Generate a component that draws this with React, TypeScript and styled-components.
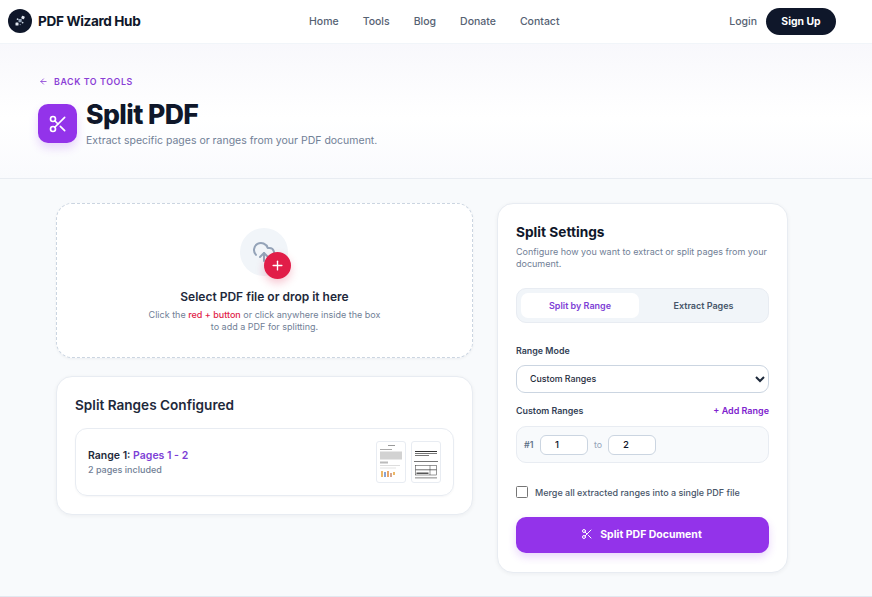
import React from "react";
import styled, { createGlobalStyle } from "styled-components";
import { ArrowLeft, Scissors, CloudUpload, Plus } from "lucide-react";

const GlobalStyle = createGlobalStyle`
  html, body {
    margin: 0;
    padding: 0;
    background: #f8fafc;
    font-family: Inter, "Liberation Sans", sans-serif;
    color: #0f172a;
  }
  * { box-sizing: border-box; }
`;

const Page = styled.div`
  width: 872px;
  height: 597px;
  overflow: hidden;
  display: flex;
  flex-direction: column;
  background: #f8fafc;
  border-bottom: 1px solid #e2e8f0;
`;

const NavBar = styled.header`
  height: 44px;
  flex: none;
  display: flex;
  align-items: center;
  padding: 0 36px 1px 8px;
  background: #fff;
  border-bottom: 1px solid #f1f5f9;
`;

const Brand = styled.div`
  width: 301px;
  display: flex;
  align-items: center;
  gap: 6px;
  font-size: 13.6px;
  font-weight: 700;
  letter-spacing: -0.36px;
  color: #0f172a;
`;

const BrandMark = styled.span`
  width: 24px;
  height: 24px;
  border-radius: 50%;
  background: #0f172a;
  display: flex;
  align-items: center;
  justify-content: center;
`;

const NavLinks = styled.nav`
  display: flex;
  gap: 24px;
`;

const NavLink = styled.a`
  font-size: 10.5px;
  font-weight: 500;
  color: #566273;
`;

const NavActions = styled.div`
  margin-left: auto;
  display: flex;
  align-items: center;
  gap: 9px;
`;

const SignUp = styled.button`
  width: 70px;
  height: 27px;
  border: 0;
  border-radius: 14px;
  background: #0f172a;
  color: #fff;
  font: 700 10.4px Inter, sans-serif;
`;

const Hero = styled.section`
  height: 135px;
  flex: none;
  padding: 31px 38px 0;
  background: linear-gradient(180deg, #f8f8fc 0%, #ffffff 55%, #f9fafd 100%);
  border-bottom: 1px solid #e8ecf2;
`;

const BackLink = styled.a`
  display: flex;
  align-items: center;
  gap: 6px;
  height: 12px;
  padding-left: 1px;
  font-size: 8.8px;
  font-weight: 600;
  letter-spacing: 0.6px;
  color: #8b3fd6;
`;

const TitleRow = styled.div`
  display: flex;
  gap: 9px;
  margin-top: 17px;
`;

const ToolIcon = styled.div`
  width: 39px;
  height: 39px;
  border-radius: 10px;
  background: #9333ea;
  color: #fff;
  display: flex;
  align-items: center;
  justify-content: center;
  box-shadow: 0 5px 10px rgba(147, 51, 234, 0.2);
`;

const Title = styled.h1`
  margin: -6px 0 0;
  font-size: 26.6px;
  line-height: 32px;
  font-weight: 800;
  letter-spacing: -0.6px;
  color: #0f172a;
`;

const Subtitle = styled.p`
  margin: 4px 0 0;
  font-size: 10.5px;
  line-height: 14px;
  color: #718096;
`;

const Main = styled.main`
  display: flex;
  align-items: flex-start;
  gap: 24px;
  padding: 24px 0 0 56px;
`;

const LeftColumn = styled.div`
  width: 417px;
  display: flex;
  flex-direction: column;
  gap: 18px;
`;

const DropZone = styled.div`
  height: 155px;
  padding-top: 24px;
  display: flex;
  flex-direction: column;
  align-items: center;
  background: #fff;
  border: 1px dashed #cbd5e1;
  border-radius: 16px;
  box-shadow: 0 1px 3px rgba(15, 23, 42, 0.05);
`;

const UploadIcon = styled.div`
  position: relative;
  width: 48px;
  height: 48px;
  margin-left: -1px;
  border-radius: 50%;
  background: #f1f5f9;
  color: #94a3b8;
  display: flex;
  align-items: center;
  justify-content: center;
`;

const RedPlus = styled.span`
  position: absolute;
  right: -3px;
  bottom: -3px;
  width: 27px;
  height: 27px;
  border-radius: 50%;
  background: #e11d48;
  color: #fff;
  display: flex;
  align-items: center;
  justify-content: center;
  box-shadow: 0 4px 8px rgba(225, 29, 72, 0.25);
`;

const DropTitle = styled.h3`
  margin: 14px 0 0;
  font-size: 12px;
  line-height: 14px;
  font-weight: 600;
  color: #1e293b;
`;

const DropText = styled.p`
  margin: 5px 0 0;
  font-size: 9px;
  line-height: 12px;
  text-align: center;
  color: #718096;
`;

const RedText = styled.span`
  color: #e11d48;
  font-weight: 500;
`;

const Card = styled.section`
  background: #fff;
  border: 1px solid #e8ecf2;
  border-radius: 16px;
  box-shadow: 0 1px 4px rgba(15, 23, 42, 0.05);
`;

const RangesCard = styled(Card)`
  height: 139px;
  padding: 20px 18px 0;
`;

const CardTitle = styled.h2`
  margin: 0;
  font-size: 13.6px;
  line-height: 17px;
  font-weight: 600;
  color: #1e293b;
`;

const RangeRow = styled.div`
  height: 68px;
  margin-top: 14px;
  padding: 0 12px;
  display: flex;
  align-items: center;
  justify-content: space-between;
  border: 1px solid #e8ecf2;
  border-radius: 12px;
  box-shadow: 0 1px 2px rgba(15, 23, 42, 0.04);
`;

const RangeInfo = styled.div`
  padding-top: 1px;
`;

const RangeName = styled.div`
  font-size: 10.5px;
  line-height: 14px;
  font-weight: 600;
  color: #1e293b;
`;

const RangePages = styled.span`
  color: #7e3fd6;
`;

const RangeMeta = styled.div`
  font-size: 9px;
  line-height: 14px;
  font-weight: 500;
  color: #718096;
`;

const Thumbs = styled.div`
  display: flex;
  gap: 5px;
`;

const Thumb = styled.div`
  width: 30px;
  height: 42px;
  border: 1px solid #e8ecf2;
  border-radius: 3px;
  background: #fff;
  overflow: hidden;
`;

const SettingsCard = styled(Card)`
  width: 291px;
  height: 370px;
  padding: 19px 18px 0;
`;

const SettingsTitle = styled.h2`
  margin: 0;
  font-size: 13.7px;
  line-height: 18px;
  font-weight: 700;
  color: #0f172a;
`;

const SettingsText = styled.p`
  margin: 5px 0 0;
  font-size: 9px;
  line-height: 12px;
  color: #718096;
`;

const Tabs = styled.div`
  height: 35px;
  margin-top: 18px;
  padding: 4px;
  display: flex;
  gap: 4px;
  background: #f1f5f9;
  border: 1px solid #e8ecf2;
  border-radius: 10px;
`;

const Tab = styled.button<{ $active?: boolean }>`
  flex: ${(p) => (p.$active ? "none" : "1")};
  width: ${(p) => (p.$active ? "118px" : "auto")};
  border: 0;
  border-radius: 7px;
  background: ${(p) => (p.$active ? "#fff" : "transparent")};
  color: ${(p) => (p.$active ? "#7e3fd6" : "#475569")};
  font: 600 9px Inter, sans-serif;
`;

const FieldLabel = styled.label`
  display: block;
  font-size: 8.9px;
  line-height: 12px;
  font-weight: 600;
  color: #334155;
`;

const ModeLabel = styled(FieldLabel)`
  margin-top: 22px;
`;

const ModeSelect = styled.select`
  display: block;
  width: 253px;
  height: 28px;
  margin-top: 8px;
  padding: 0 9px 2px;
  background: #fff;
  border: 1px solid #cbd5e1;
  border-radius: 9px;
  font: 500 8.8px Inter, sans-serif;
  color: #1e293b;
`;

const CustomHead = styled.div`
  margin-top: 12px;
  display: flex;
  justify-content: space-between;
  align-items: center;
`;

const AddRange = styled.a`
  font-size: 9px;
  line-height: 12px;
  font-weight: 600;
  color: #7e22ce;
`;

const RangeBox = styled.div`
  height: 37px;
  margin-top: 9px;
  padding: 0 7px;
  display: flex;
  align-items: center;
  background: #f8fafc;
  border: 1px solid #e8ecf2;
  border-radius: 10px;
  font-size: 8.8px;
`;

const RangeIndex = styled.span`
  width: 16px;
  font-weight: 600;
  color: #64748b;
`;

const PageInput = styled.input`
  width: 48px;
  height: 20px;
  padding: 0 0 0 14px;
  background: #fff;
  border: 1px solid #cbd5e1;
  border-radius: 6px;
  font: 500 9.6px Inter, sans-serif;
  color: #0f172a;
`;

const ToLabel = styled.span`
  width: 20px;
  text-align: center;
  color: #94a3b8;
`;

const MergeRow = styled.label`
  margin-top: 23px;
  display: flex;
  align-items: center;
  gap: 7px;
  font-size: 9px;
  font-weight: 500;
  color: #475569;
`;

const MergeCheck = styled.input`
  appearance: none;
  width: 12px;
  height: 12px;
  margin: 0;
  background: #fff;
  border: 1px solid #767676;
  border-radius: 1.5px;
`;

const SplitButton = styled.button`
  width: 253px;
  height: 36px;
  margin-top: 19px;
  padding: 0 2px 2px 0;
  display: flex;
  align-items: center;
  justify-content: center;
  gap: 7px;
  border: 0;
  border-radius: 10px;
  background: #9333ea;
  color: #fff;
  font: 700 10.5px Inter, sans-serif;
  box-shadow: 0 4px 8px rgba(147, 51, 234, 0.2);
`;

const LogoGlyph = () => (
  <svg width="14" height="14" viewBox="0 0 14 14" fill="#e2e8f0">
    <rect x="8.5" y="2" width="3" height="3" rx="0.6" transform="rotate(20 10 3.5)" />
    <rect x="5.5" y="5" width="3.2" height="3.2" rx="0.6" fill="#94a3b8" />
    <rect x="2.5" y="8.5" width="3" height="3" rx="0.6" />
    <circle cx="4.6" cy="5.2" r="0.9" fill="#cbd5e1" />
    <circle cx="9.6" cy="8.6" r="0.9" fill="#cbd5e1" />
    <circle cx="7.2" cy="10.6" r="0.6" fill="#94a3b8" />
  </svg>
);

const ThumbTextPage = () => (
  <svg width="28" height="40" viewBox="0 0 28 40">
    <rect x="11" y="3" width="7" height="1" fill="#999" />
    <rect x="3" y="7" width="12" height="1" fill="#aaa" />
    <rect x="3" y="9.5" width="22" height="8" fill="#d2d2d2" />
    <rect x="3" y="19.5" width="8" height="2" fill="#bbb" />
    <rect x="3" y="23" width="20" height="1" fill="#ddd" />
    <rect x="3" y="25.5" width="16" height="1" fill="#e4e4e4" />
    <rect x="4" y="29" width="2" height="6" fill="#edb766" />
    <rect x="7" y="30" width="2" height="5" fill="#8aa4d4" />
    <rect x="10" y="29" width="2" height="6" fill="#e8a56a" />
    <rect x="13" y="31" width="2" height="4" fill="#d4a690" />
    <rect x="16" y="30" width="2" height="3" fill="#edb766" />
  </svg>
);

const ThumbTablePage = () => (
  <svg width="28" height="40" viewBox="0 0 28 40">
    <rect x="3" y="9" width="22" height="1" fill="#333" />
    <rect x="3" y="11" width="22" height="0.8" fill="#555" />
    <rect x="3" y="13" width="14" height="0.8" fill="#555" />
    <rect x="2" y="19" width="24" height="0.8" fill="#555" />
    <rect x="3.5" y="23.5" width="21" height="9.5" fill="none" stroke="#333" strokeWidth="0.5" />
    <line x1="18" y1="23.5" x2="18" y2="33" stroke="#333" strokeWidth="0.5" />
    <rect x="3.5" y="27.5" width="21" height="0.7" fill="#333" />
    <rect x="4.5" y="30.5" width="12" height="1.5" fill="#555" />
    <rect x="3" y="35.5" width="22" height="0.8" fill="#666" />
  </svg>
);

export default function App() {
  return (
    <>
      <GlobalStyle />
      <Page>
        <NavBar>
          <Brand>
            <BrandMark>
              <LogoGlyph />
            </BrandMark>
            PDF Wizard Hub
          </Brand>
          <NavLinks>
            <NavLink>Home</NavLink>
            <NavLink>Tools</NavLink>
            <NavLink>Blog</NavLink>
            <NavLink>Donate</NavLink>
            <NavLink>Contact</NavLink>
          </NavLinks>
          <NavActions>
            <NavLink>Login</NavLink>
            <SignUp>Sign Up</SignUp>
          </NavActions>
        </NavBar>
        <Hero>
          <BackLink>
            <ArrowLeft size={9} strokeWidth={2.2} />
            BACK TO TOOLS
          </BackLink>
          <TitleRow>
            <ToolIcon>
              <Scissors size={20} strokeWidth={2} />
            </ToolIcon>
            <div>
              <Title>Split PDF</Title>
              <Subtitle>Extract specific pages or ranges from your PDF document.</Subtitle>
            </div>
          </TitleRow>
        </Hero>
        <Main>
          <LeftColumn>
            <DropZone>
              <UploadIcon>
                <CloudUpload size={24} strokeWidth={2} />
                <RedPlus>
                  <Plus size={15} strokeWidth={2.2} />
                </RedPlus>
              </UploadIcon>
              <DropTitle>Select PDF file or drop it here</DropTitle>
              <DropText>
                Click the <RedText>red + button</RedText> or click anywhere inside the box
                <br />
                to add a PDF for splitting.
              </DropText>
            </DropZone>
            <RangesCard>
              <CardTitle>Split Ranges Configured</CardTitle>
              <RangeRow>
                <RangeInfo>
                  <RangeName>
                    Range 1: <RangePages>Pages 1 - 2</RangePages>
                  </RangeName>
                  <RangeMeta>2 pages included</RangeMeta>
                </RangeInfo>
                <Thumbs>
                  <Thumb>
                    <ThumbTextPage />
                  </Thumb>
                  <Thumb>
                    <ThumbTablePage />
                  </Thumb>
                </Thumbs>
              </RangeRow>
            </RangesCard>
          </LeftColumn>
          <SettingsCard>
            <SettingsTitle>Split Settings</SettingsTitle>
            <SettingsText>Configure how you want to extract or split pages from your document.</SettingsText>
            <Tabs>
              <Tab $active>Split by Range</Tab>
              <Tab>Extract Pages</Tab>
            </Tabs>
            <ModeLabel>Range Mode</ModeLabel>
            <ModeSelect defaultValue="custom">
              <option value="custom">Custom Ranges</option>
            </ModeSelect>
            <CustomHead>
              <FieldLabel>Custom Ranges</FieldLabel>
              <AddRange>+ Add Range</AddRange>
            </CustomHead>
            <RangeBox>
              <RangeIndex>#1</RangeIndex>
              <PageInput defaultValue="1" />
              <ToLabel>to</ToLabel>
              <PageInput defaultValue="2" />
            </RangeBox>
            <MergeRow>
              <MergeCheck type="checkbox" />
              Merge all extracted ranges into a single PDF file
            </MergeRow>
            <SplitButton>
              <Scissors size={12} strokeWidth={2} />
              Split PDF Document
            </SplitButton>
          </SettingsCard>
        </Main>
      </Page>
    </>
  );
}
